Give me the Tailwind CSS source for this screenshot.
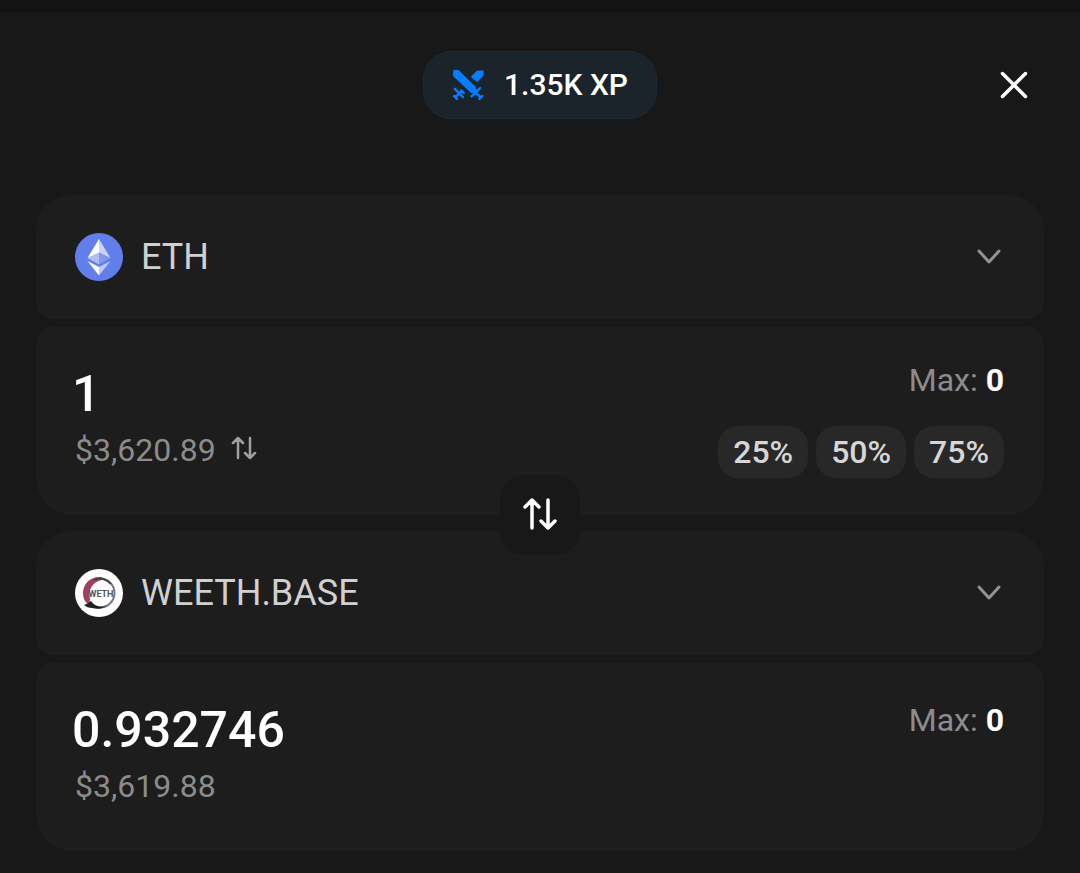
<!DOCTYPE html>
<html lang="en">

<head>
    <meta charset="UTF-8">
    <meta name="viewport" content="width=device-width, initial-scale=1">
    <title>Swap</title>
    <script src="https://cdn.jsdelivr.net/npm/@tailwindcss/browser@4"></script>
</head>

<body class="bg-[#181818] min-h-screen border-t-12 border-[#141414] font-['Roboto','Inter',sans-serif] text-white">
    <header class="grid grid-cols-[1fr_auto_1fr] items-center px-9 pt-[39px] pb-19">
        <div class="col-start-2 flex items-center gap-5 h-17 px-7 rounded-[28px] border border-[#1e2a34] bg-[#1b232b]">
            <svg class="size-8" viewBox="0 0 90 90" fill="#0a7cff" stroke="#0a7cff" stroke-linejoin="round" stroke-linecap="round">
                <path stroke-width="6" d="M80 7h6v9L71 33 57 22 71 8z" />
                <path stroke-width="8" d="M7 7h10l46 45 4 14-12-3L7 18z" />
                <path stroke-width="7" fill="none" d="M79 54L55 77M66 66l15 14M77 84l8-8" />
                <path stroke-width="7" fill="none" d="M8 56l23 23M26 62L10 79M6 76l8 8M26 60l7 7" />
            </svg>
            <span class="text-[30px] leading-10 font-medium">1.35K XP</span>
        </div>
        <button type="button" aria-label="Close" class="justify-self-end p-3">
            <svg class="size-9" viewBox="0 0 36 36" fill="none" stroke="currentColor" stroke-width="3.500" stroke-linecap="round">
                <path d="M6.500 6.500l23 23M29.500 6.500l-23 23" />
            </svg>
        </button>
    </header>

    <main class="px-9 pb-5">
        <form class="flex flex-col gap-4">
            <!-- From -->
            <section class="relative flex flex-col gap-2">
                <div class="flex items-center gap-[18px] h-31 px-[39px] rounded-t-[36px] rounded-b-2xl bg-[#1d1d1d]">
                    <svg class="size-12" viewBox="0 0 48 48">
                        <circle cx="24" cy="24" r="24" fill="#627eea" />
                        <path fill="#fff" d="M24 6v14L12.500 25z" />
                        <path fill="#c9d3f8" d="M24 6v14L35.500 25z" />
                        <path fill="#b0bdf3" d="M24 19.500v12L12.500 25z" />
                        <path fill="#8197ee" d="M24 19.500v12L35.500 25z" />
                        <path fill="#fff" d="M24 34v8.500L12.500 28z" />
                        <path fill="#c0cbf6" d="M24 34v8.500L35.500 28z" />
                    </svg>
                    <select aria-label="From token" class="grow min-w-0 appearance-none bg-transparent text-4xl text-[#d0d0d0] outline-none">
                        <option>ETH</option>
                    </select>
                    <svg class="size-8" viewBox="0 0 32 32" fill="none" stroke="#929292" stroke-width="3" stroke-linecap="round" stroke-linejoin="round">
                        <path d="M6 10l10 11 10-11" />
                    </svg>
                </div>
                <div class="flex justify-between min-h-47 px-9 pt-[35px] pb-9 rounded-t-2xl rounded-b-[36px] bg-[#1d1d1d]">
                    <div class="min-w-0 grow">
                        <input type="text" inputmode="decimal" aria-label="Amount to send" value="1" class="block w-full h-16 bg-transparent text-[50px] font-medium outline-none">
                        <div class="flex items-center gap-3 mt-1 pl-[3px] text-[32px] leading-10 text-[#8c8c8c]">
                            <span>$3,620.89</span>
                            <button type="button" aria-label="Switch currency">
                                <svg class="size-8" viewBox="0 0 32 32" fill="none" stroke="#a0a0a0" stroke-width="2.500" stroke-linecap="round" stroke-linejoin="round">
                                    <path d="M10 24V4M5 9l5-5 5 5M22 4v20M17 19l5 5 5-5" />
                                </svg>
                            </button>
                        </div>
                    </div>
                    <div class="shrink-0 pr-1 text-right">
                        <p class="text-[32px] leading-9 text-[#8c8c8c]">Max: <span class="font-bold text-white">0</span></p>
                        <div class="flex gap-2 mt-7 text-[32px] font-medium text-[#d6d6d6]">
                            <button type="button" class="h-13 px-[15px] rounded-[20px] bg-[#282828]">25%</button>
                            <button type="button" class="h-13 px-[15px] rounded-[20px] bg-[#282828]">50%</button>
                            <button type="button" class="h-13 px-[15px] rounded-[20px] bg-[#282828]">75%</button>
                        </div>
                    </div>
                </div>
                <button type="button" aria-label="Swap tokens" class="absolute left-1/2 -bottom-10 z-10 -translate-x-1/2 flex items-center justify-center size-20 rounded-3xl bg-[#181818]">
                    <svg class="size-10" viewBox="0 0 40 40" fill="none" stroke="currentColor" stroke-width="3.500" stroke-linecap="round" stroke-linejoin="round">
                        <path d="M12 33V5M5 12l7-7 7 7M28 5v28M21 26l7 7 7-7" />
                    </svg>
                </button>
            </section>

            <!-- To -->
            <section class="flex flex-col gap-2">
                <div class="flex items-center gap-[18px] h-31 px-[39px] rounded-t-[36px] rounded-b-2xl bg-[#1d1d1d]">
                    <svg class="size-12" viewBox="0 0 48 48">
                        <circle cx="24" cy="24" r="24" fill="#fff" />
                        <circle cx="25" cy="24" r="14.500" fill="none" stroke="#77777c" stroke-width="2" />
                        <path fill="#a04064" d="M27 8C15 7 8 15 8 24c0 5 2 9 5 11 1-2 2-3 2-5-2-9 2-17 12-19z" />
                        <path fill="#222" d="M9 36c4-1 5-3 7-4 4 6 11 7 16 4-5 5-11 4-15 3-3 0-6-1-8-3z" />
                        <path fill="none" stroke="#444" stroke-width="2" d="M19 11c6-3 13-1 17 4" />
                        <text x="26" y="28" text-anchor="middle" font-size="9" font-weight="700" fill="#555">WETH</text>
                    </svg>
                    <select aria-label="To token" class="grow min-w-0 appearance-none bg-transparent text-4xl text-[#d0d0d0] outline-none">
                        <option>WEETH.BASE</option>
                    </select>
                    <svg class="size-8" viewBox="0 0 32 32" fill="none" stroke="#929292" stroke-width="3" stroke-linecap="round" stroke-linejoin="round">
                        <path d="M6 10l10 11 10-11" />
                    </svg>
                </div>
                <div class="flex justify-between min-h-47 px-9 pt-[35px] pb-9 rounded-t-2xl rounded-b-[36px] bg-[#1d1d1d]">
                    <div class="min-w-0 grow">
                        <input type="text" readonly aria-label="Amount to receive" value="0.932746" class="block w-full h-16 bg-transparent text-[50px] font-medium outline-none">
                        <p class="mt-1 pl-[3px] text-[32px] leading-10 text-[#8c8c8c]">$3,619.88</p>
                    </div>
                    <p class="shrink-0 pr-1 text-[32px] leading-11 text-[#8c8c8c]">Max: <span class="font-bold text-white">0</span></p>
                </div>
            </section>
        </form>
    </main>
</body>

</html>
